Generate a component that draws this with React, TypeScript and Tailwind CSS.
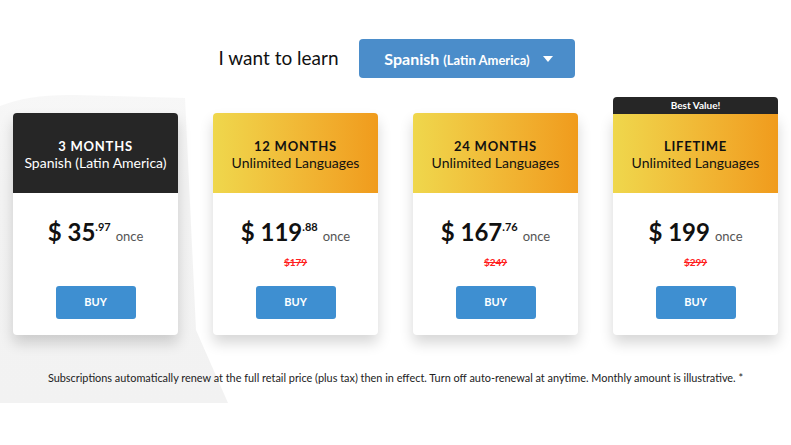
import React from "react";

type Plan = {
  title: string;
  sub: string;
  dollars: string;
  cents?: string;
  old?: string;
  dark?: boolean;
  badge?: string;
};

const plans: Plan[] = [
  { title: "3 MONTHS", sub: "Spanish (Latin America)", dollars: "35", cents: ".97", dark: true },
  { title: "12 MONTHS", sub: "Unlimited Languages", dollars: "119", cents: ".88", old: "$179" },
  { title: "24 MONTHS", sub: "Unlimited Languages", dollars: "167", cents: ".76", old: "$249" },
  { title: "LIFETIME", sub: "Unlimited Languages", dollars: "199", old: "$299", badge: "Best Value!" },
];

function Card({ p }: { p: Plan }) {
  return (
    <div className="relative w-[165px] flex flex-col rounded-[4px] bg-white shadow-[0_8px_14px_rgba(0,0,0,0.16)]">
      {p.badge && (
        <div className="absolute left-0 right-0 top-[-16px] h-[17px] rounded-t-[4px] bg-[#262626] text-white text-[10px] font-bold flex items-center justify-center">
          {p.badge}
        </div>
      )}
      <div
        className={
          p.dark
            ? "h-[80px] rounded-t-[4px] bg-[#262626] text-white flex flex-col items-center justify-center"
            : p.badge
            ? "h-[80px] bg-gradient-to-r from-[#efd74c] to-[#f09b1c] text-[#111] flex flex-col items-center justify-center"
            : "h-[80px] rounded-t-[4px] bg-gradient-to-r from-[#efd74c] to-[#f09b1c] text-[#111] flex flex-col items-center justify-center"
        }
      >
        <div className="text-[13px] font-bold tracking-[0.06em] leading-[16px] mt-[2px]">{p.title}</div>
        <div className="text-[14px] leading-[17px]">{p.sub}</div>
      </div>
      <div className="h-[142px] flex flex-col items-center">
        <div className="mt-[25px] flex items-baseline text-[#111]">
          <span className="text-[24px] font-bold leading-[28px]">$ {p.dollars}</span>
          {p.cents && <span className="text-[11px] font-bold relative top-[-10px]">{p.cents}</span>}
          <span className="text-[13px] text-[#555] ml-[5px]">once</span>
        </div>
        <div className="h-[16px] mt-[7px] text-[10px] font-bold text-[#ff2020] line-through leading-[16px]">{p.old ?? ""}</div>
        <div className="mt-[16px] w-[80px] h-[33px] rounded-[3px] bg-[#3e8fd1] text-white text-[11px] font-bold flex items-center justify-center">
          BUY
        </div>
      </div>
    </div>
  );
}

export default function App() {
  return (
    <div
      className="relative w-[791px] h-[445px] bg-white overflow-hidden"
      style={{ fontFamily: "Lato, 'Noto Sans', sans-serif" }}
    >
      <svg className="absolute left-0 top-0" width="791" height="445" viewBox="0 0 791 445">
        <defs>
          <linearGradient id="bgfade" x1="0" y1="0" x2="0" y2="1">
            <stop offset="0" stopColor="#f7f7f7" />
            <stop offset="0.3" stopColor="#f3f3f3" />
            <stop offset="1" stopColor="#f2f2f2" />
          </linearGradient>
        </defs>
        <path d="M0 106 Q30 94 75 95 L185 98 L196 330 L228 403 L0 403 Z" fill="url(#bgfade)" />
      </svg>
      <div className="relative flex flex-col items-center">
        <div className="mt-[39px] flex items-center gap-[20px] h-[39px]">
          <span className="text-[19px] text-[#111] ml-[2px]">I want to learn</span>
          <div className="w-[216px] h-[39px] rounded-[4px] bg-[#4b8dca] text-white flex items-center justify-center gap-[13px] pl-[4px]">
            <span className="font-bold">
              <span className="text-[16px]">Spanish</span>{" "}
              <span className="text-[13px]">(Latin America)</span>
            </span>
            <svg width="10" height="6" viewBox="0 0 10 6">
              <path d="M0 0 L10 0 L5 6 Z" fill="white" />
            </svg>
          </div>
        </div>
        <div className="mt-[35px] flex gap-[35px]">
          {plans.map((p) => (
            <Card key={p.title} p={p} />
          ))}
        </div>
        <div className="mt-[35px] text-[10.9px] text-[#222]">
          Subscriptions automatically renew at the full retail price (plus tax) then in effect. Turn off auto-renewal at anytime. Monthly amount is illustrative. *
        </div>
      </div>
    </div>
  );
}
